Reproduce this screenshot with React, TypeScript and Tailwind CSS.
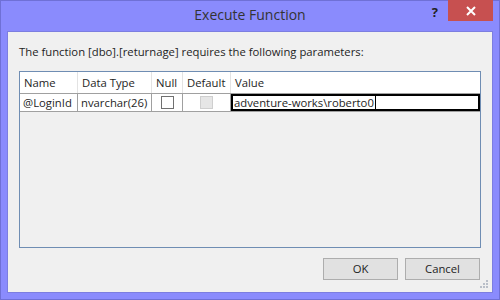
const font = { fontFamily: '"Open Sans", "Noto Sans", "Liberation Sans", sans-serif' };

function Grip() {
  // little triangle of dots in the bottom right corner
  const dots = [
    [6, 0],
    [3, 3], [6, 3],
    [0, 6], [3, 6], [6, 6],
  ];
  return (
    <svg width="9" height="9" className="absolute bottom-[3px] right-[3px]">
      {dots.map(([x, y], i) => (
        <rect key={i} x={x} y={y} width="2" height="2" fill="#b9bfc9" />
      ))}
    </svg>
  );
}

export default function App() {
  return (
    <div
      className="flex h-[300px] w-[500px] flex-col border border-[#6f70d6] bg-[#8a8bfd] text-[#1e1e1e]"
      style={font}
    >
      {/* title bar */}
      <div className="relative flex h-[30px] shrink-0 items-center justify-center">
        <span className="pb-[4px] text-[14px] text-[#333]">Execute Function</span>
        <span className="absolute right-[61px] top-[2px] text-[13px] font-bold text-[#222]">?</span>
        <button className="absolute right-[6px] top-[-1px] flex h-[21px] w-[45px] items-center justify-center bg-[#c75050]">
          <svg width="10" height="10" viewBox="0 0 10 10">
            <path d="M1 1L9 9M9 1L1 9" stroke="white" strokeWidth="2" />
          </svg>
        </button>
      </div>

      {/* client area */}
      <div className="relative mx-[6px] mb-[6px] flex flex-1 flex-col border border-[#7c7ee0] bg-[#f0f0f0] px-[11px] pt-[12px] text-[11.3px]">
        <p className="leading-[16px]">
          The function [dbo].[returnage] requires the following parameters:
        </p>

        <div className="mt-[11px] h-[177px] border border-[#6f8db3] bg-[#f0f0f0]">
          <div className="flex h-[22px] border-b border-[#a0a0a0] bg-white">
            <div className="w-[58px] border-r border-[#e3e3e3] pl-[4px] leading-[21px]">Name</div>
            <div className="w-[74px] border-r border-[#e3e3e3] pl-[4px] leading-[21px]">Data Type</div>
            <div className="w-[31px] border-r border-[#e3e3e3] pl-[4px] leading-[21px]">Null</div>
            <div className="w-[48px] border-r border-[#e3e3e3] pl-[4px] leading-[21px]">Default</div>
            <div className="flex-1 pl-[4px] leading-[21px]">Value</div>
          </div>
          <div className="flex h-[18px] border-b border-[#a0a0a0] bg-white">
            <div className="w-[58px] border-r border-[#a0a0a0] pl-[3px] leading-[17px]">@LoginId</div>
            <div className="w-[74px] border-r border-[#a0a0a0] pl-[3px] leading-[17px]">nvarchar(26)</div>
            <div className="flex w-[31px] items-center justify-center border-r border-[#a0a0a0]">
              <div className="h-[13px] w-[13px] border border-[#707070] bg-white" />
            </div>
            <div className="flex w-[48px] items-center justify-center border-r border-[#a0a0a0]">
              <div className="h-[13px] w-[13px] border border-[#cfcfcf] bg-[#e6e6e6]" />
            </div>
            <div className="flex flex-1 items-stretch border-2 border-black">
              <span className="border-r border-black pl-[1px] pr-[1px] leading-[14px]">
                adventure-works\roberto0
              </span>
            </div>
          </div>
        </div>

        <div className="mt-[10px] flex justify-end gap-[7px] pr-[1px]">
          <button className="h-[22px] w-[75px] border border-[#adadad] bg-[#e1e1e1]">OK</button>
          <button className="h-[22px] w-[75px] border border-[#adadad] bg-[#e1e1e1]">Cancel</button>
        </div>
        <Grip />
      </div>
    </div>
  );
}
